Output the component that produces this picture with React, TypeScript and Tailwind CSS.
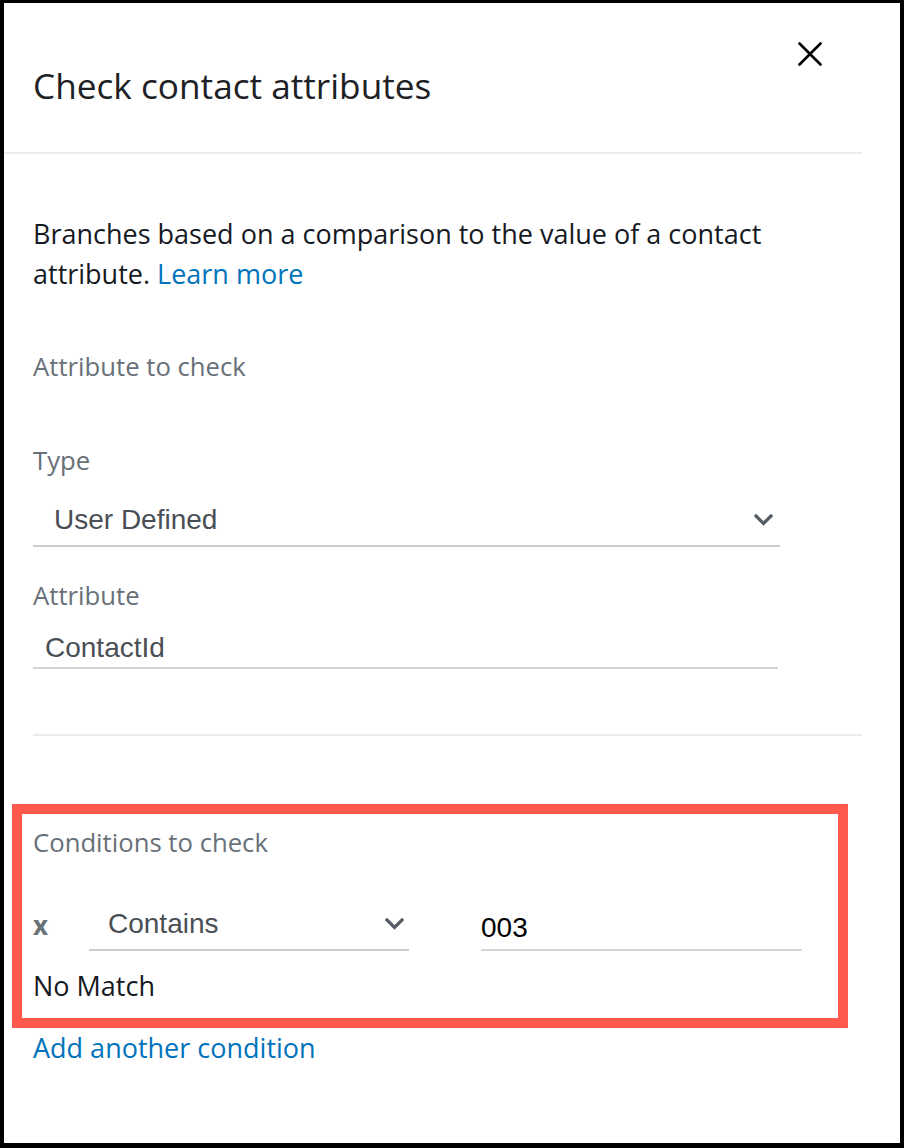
const ember = "font-['Open_Sans','Noto_Sans',sans-serif]"
const helv = "font-['Liberation_Sans',Arial,sans-serif]"

function Chevron() {
  return (
    <svg width="19" height="12" viewBox="0 0 19 12" className="shrink-0">
      <path d="M2 2 L9.5 9.5 L17 2" fill="none" stroke="#545b64" strokeWidth="3.2" strokeLinecap="square" />
    </svg>
  )
}

function Label({ children, className = '' }: { children: React.ReactNode; className?: string }) {
  return <div className={`${ember} text-[25.7px] leading-[32px] text-[#687078] ${className}`}>{children}</div>
}

export default function App() {
  return (
    <div className="w-[904px] h-[1148px] bg-white border-black border-l-4 border-r-4 border-t-[3px] border-b-[5px] overflow-hidden">
      <div className="w-[858px]">
        <header className="flex h-[149px]">
          <h1 className={`${ember} pl-[29px] pt-[60px] text-[35.2px] leading-[44px] font-normal text-[#1d2126]`}>
            Check contact attributes
          </h1>
          <button className="ml-auto mr-[40px] mt-[39px] self-start cursor-pointer" aria-label="Close">
            <svg width="24" height="24" viewBox="0 0 24 24">
              <path d="M1.5 1.5 L22.5 22.5 M22.5 1.5 L1.5 22.5" stroke="#000" strokeWidth="2.6" strokeLinecap="round" />
            </svg>
          </button>
        </header>
        <div className="h-[2px] bg-[#eaeded]" />

        <div className="pl-[29px]">
          <p className={`${ember} mt-[60px] text-[27px] leading-[40px] text-[#16191f]`}>
            Branches based on a comparison to the value of a contact
            <br />
            attribute. <a className="text-[#0073bb] cursor-pointer">Learn more</a>
          </p>

          <Label className="mt-[57px]">Attribute to check</Label>

          <Label className="mt-[62px]">Type</Label>
          <div className="mt-[24px] w-[747px] flex items-center justify-between pl-[21px] pr-[7px] pb-[6px] border-b-2 border-[#cccccc]">
            <span className={`${helv} text-[28px] leading-[38px] text-[#4a4f55]`}>User Defined</span>
            <Chevron />
          </div>

          <Label className="mt-[33px]">Attribute</Label>
          <div className="mt-[17px] w-[745px] pl-[12px] border-b-2 border-[#d5d5d5]">
            <span className={`${helv} text-[28px] leading-[38px] text-[#4a4f55]`}>ContactId</span>
          </div>

          <div className="mt-[65px] h-[2px] bg-[#eaeded]" />

          <section className="mt-[68px] -ml-[21px] w-[836px] border-[10px] border-[#fd5a4d] pl-[11px] pt-[13px] pb-[16px]">
            <Label>Conditions to check</Label>
            <div className="mt-[46px] flex items-end">
              <span className={`${ember} w-[56px] font-bold text-[26px] leading-[38px] pb-[7px] text-[#687078]`}>x</span>
              <div className="w-[320px] flex items-center justify-between pl-[19px] pr-[5px] pb-[6px] border-b-2 border-[#cccccc]">
                <span className={`${helv} text-[28px] leading-[38px] text-[#4a4f55]`}>Contains</span>
                <Chevron />
              </div>
              <div className="ml-[72px] w-[321px] pb-[2px] border-b-2 border-[#d5d5d5]">
                <span className={`${helv} text-[28px] leading-[38px] text-black`}>003</span>
              </div>
            </div>
            <div className={`${ember} mt-[19px] text-[27px] leading-[32px] text-[#16191f]`}>No Match</div>
          </section>

          <a className={`${ember} block mt-[4px] text-[27px] leading-[32px] text-[#0073bb] cursor-pointer`}>
            Add another condition
          </a>
        </div>
      </div>
    </div>
  )
}
